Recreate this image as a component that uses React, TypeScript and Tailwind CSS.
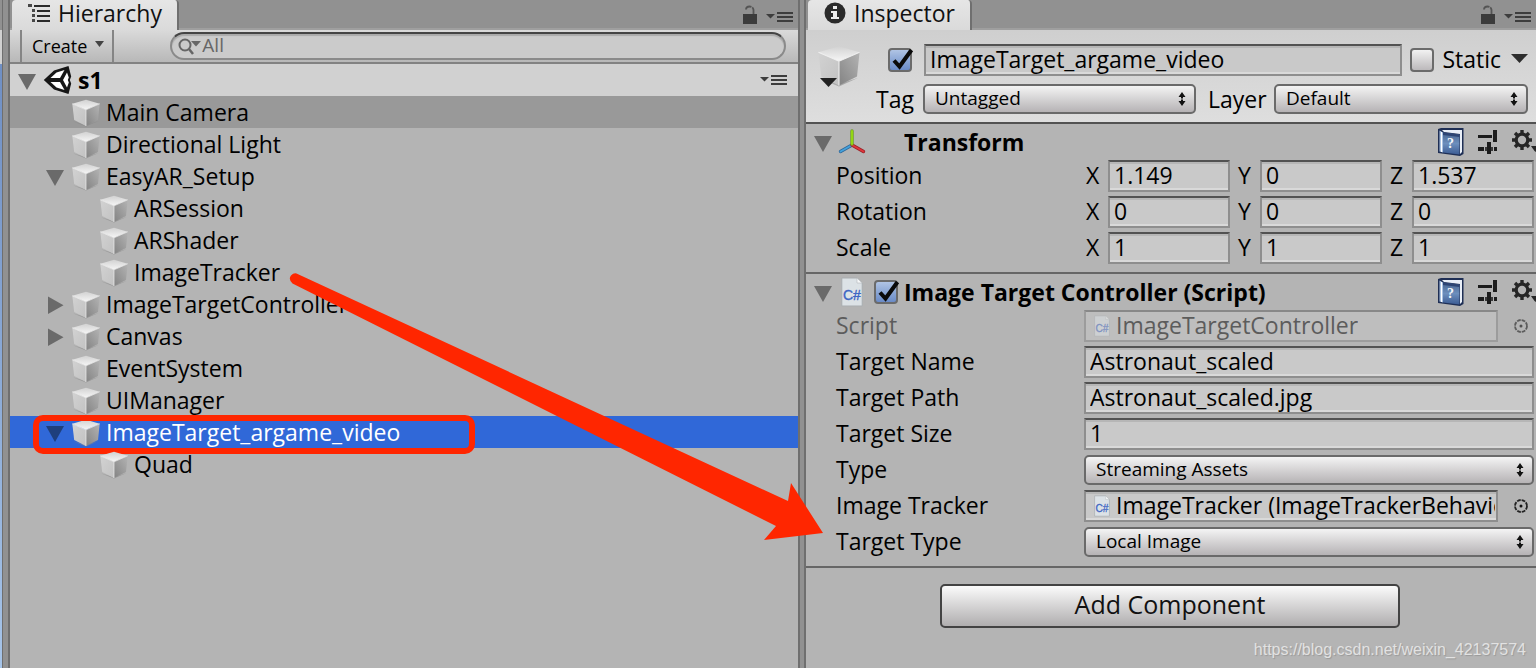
import { useState } from 'react'
import type { ReactNode } from 'react'

type Node = { id: string; depth: number; fold?: 'open' | 'closed' }

const nodes: Node[] = [
  { id: 'Main Camera', depth: 0 },
  { id: 'Directional Light', depth: 0 },
  { id: 'EasyAR_Setup', depth: 0, fold: 'open' },
  { id: 'ARSession', depth: 1 },
  { id: 'ARShader', depth: 1 },
  { id: 'ImageTracker', depth: 1 },
  { id: 'ImageTargetController', depth: 0, fold: 'closed' },
  { id: 'Canvas', depth: 0, fold: 'closed' },
  { id: 'EventSystem', depth: 0 },
  { id: 'UIManager', depth: 0 },
  { id: 'ImageTarget_argame_video', depth: 0, fold: 'open' },
  { id: 'Quad', depth: 1 },
]

const transformRows = [
  { label: 'Position', values: ['1.149', '0', '1.537'] },
  { label: 'Rotation', values: ['0', '0', '0'] },
  { label: 'Scale', values: ['1', '1', '1'] },
]

const fieldClass =
  'h-8 min-w-0 border-2 border-[#8e8e8e] border-t-[#525252] bg-[#c9c9c9] px-1 pb-[2px] text-[23px] leading-6 text-black outline-none shadow-[inset_0_2px_0_#b6b6b6,inset_0_-2px_0_#d9d9d9]'

/* ---------- icons ---------- */

function Cube({ size = 28 }: { size?: number }) {
  return (
    <svg width={size} height={(size * 30) / 28} viewBox="0 -2 28 30" className="shrink-0" aria-hidden="true">
      <defs>
        <linearGradient id="cubeTop" x1="0" y1="0" x2="0" y2="1">
          <stop offset="0" stopColor="#d2d2d2" />
          <stop offset="1" stopColor="#f6f6f6" />
        </linearGradient>
        <linearGradient id="cubeLeft" x1="0" y1="0" x2="1" y2="1">
          <stop offset="0" stopColor="#d2d2d2" />
          <stop offset="1" stopColor="#c2c2c2" />
        </linearGradient>
        <linearGradient id="cubeRight" x1="1" y1="0" x2="0" y2="1">
          <stop offset="0" stopColor="#b4b4b4" />
          <stop offset="1" stopColor="#838383" />
        </linearGradient>
      </defs>
      <path d="M1.5 22.5 14 27.6 26.5 22 14 26Z" fill="#888" opacity=".6" />
      <path d="M.3 4.8 14 .8 27.7 4.8 14 10.8Z" fill="url(#cubeTop)" />
      <path d="M.3 4.8 14 10.8V27L2.2 21Z" fill="url(#cubeLeft)" />
      <path d="M27.7 4.8 14 10.8V27L26 21Z" fill="url(#cubeRight)" />
      <path d="M.3 4.8 14 10.8 27.7 4.8M14 10.8V27" fill="none" stroke="#f0f0f0" strokeWidth=".7" />
    </svg>
  )
}

function Triangle({ dir = 'down', color = '#6a6a6a' }: { dir?: 'down' | 'right'; color?: string }) {
  return (
    <svg width="18" height="20" viewBox="0 0 18 20" aria-hidden="true">
      <path d={dir === 'down' ? 'M0 4H18L9 20Z' : 'M2 2.5V20L17.5 11.200Z'} fill={color} />
    </svg>
  )
}

function UnityLogo() {
  return (
    <svg width="30" height="30" viewBox="0 0 30 30" aria-hidden="true">
      <path d="M.8 15 11 5.500 25.500 1 28.200 11.500 26.800 15 28.200 18.500 25.500 29 11 24.500Z" fill="#161616" />
      <path d="M7.500 13 13.500 7.500 21.500 5 17 13Z" fill="#fff" />
      <path d="M7.500 17 13.500 22.500 21.500 25 17 17Z" fill="#fff" />
      <path d="M20 15 24 7.500 25.800 12.500 24.800 15 25.800 17.500 24 22.500Z" fill="#fff" />
    </svg>
  )
}

function LockIcon() {
  return (
    <svg width="16" height="20" viewBox="0 0 16 20" aria-hidden="true">
      <path d="M4 4.500Q4 1.500 7.500 1.500T11.500 5V9" fill="none" stroke="#3b3b3b" strokeWidth="1.800" strokeDasharray="7 1" opacity=".7" />
      <path d="M1 9H15V19H1Z" fill="#3b3b3b" />
    </svg>
  )
}

function MenuIcon() {
  return (
    <svg width="28" height="12" viewBox="0 0 28 12" aria-hidden="true">
      <path d="M0 3H9L4.500 7.500Z" fill="#3d3d3d" />
      <path d="M11 2H27M11 6H27M11 10H27" stroke="#3d3d3d" strokeWidth="2" />
    </svg>
  )
}

function HelpBook() {
  return (
    <svg width="26" height="28" viewBox="0 0 26 28" aria-hidden="true">
      <defs>
        <linearGradient id="book" x1="0" y1="0" x2="0" y2="1">
          <stop offset="0" stopColor="#46648f" />
          <stop offset=".5" stopColor="#6d8fbd" />
          <stop offset="1" stopColor="#3c5c94" />
        </linearGradient>
      </defs>
      <path d="M0 1 3 0H25.500V26L22 28 0 25Z" fill="#1f2f55" />
      <path d="M4 2H24V24L22 26V6L6 4Z" fill="#e9eff8" />
      <path d="M1.500 2.500 5 4.500V24.500L1.500 23.500Z" fill="#a9c2e2" />
      <path d="M3.500 4V24" stroke="#fff" strokeWidth="1" />
      <path d="M5 4.500 21.500 6.500V26.500L5 24.500Z" fill="url(#book)" />
      <path d="M5 4.500 21.500 6.500V9L5 7Z" fill="#2c4473" />
      <text x="9" y="20" fontSize="14" fontWeight="700" fill="#f4f7fb" fontFamily="Liberation Serif, serif">?</text>
    </svg>
  )
}

function PresetIcon() {
  return (
    <svg width="22" height="24" viewBox="0 0 22 24" aria-hidden="true">
      <g fill="#1c1c1c">
        <path d="M2 5H16V8H2ZM17 0H21V12H17Z" />
        <path d="M2 17H8V21H2ZM11 12H15V24H11ZM18 17H21V21H18Z" />
        <path d="M9 17H17V21H9Z" opacity=".8" />
      </g>
    </svg>
  )
}

function GearIcon() {
  return (
    <svg width="26" height="24" viewBox="0 0 26 24" className="max-w-none" aria-hidden="true">
      <g stroke="#262626" fill="none">
        <circle cx="12" cy="10" r="5.800" strokeWidth="3.200" />
        <path
          d="M12 0V4M12 16V20M2 10H6M18 10H22M5 3 7.800 5.800M16.200 14.200 19 17M5 17 7.800 14.200M16.200 5.800 19 3"
          strokeWidth="3.400"
        />
      </g>
      <path d="M21 16H26V22L24.500 21Z" fill="#262626" />
    </svg>
  )
}

function AxisIcon() {
  return (
    <svg width="28" height="28" viewBox="0 0 28 28" aria-hidden="true">
      <g strokeLinecap="round" fill="none">
        <path d="M14 17 2.500 23.500" stroke="#31689a" strokeWidth="3.400" />
        <path d="M14 17 2.500 23.500" stroke="#43a2dc" strokeWidth="1.800" />
        <path d="M14 17 25.500 23.500" stroke="#9a2328" strokeWidth="3.400" />
        <path d="M14 17 25.500 23.500" stroke="#e0353c" strokeWidth="1.800" />
        <path d="M14 16V3" stroke="#6f9c22" strokeWidth="3.400" />
        <path d="M14 16V3" stroke="#93d612" strokeWidth="2" />
      </g>
    </svg>
  )
}

function ScriptIcon({ small }: { small?: boolean }) {
  return (
    <svg width={small ? 16 : 22} height={small ? 22 : 30} viewBox="0 0 22 30" className="shrink-0" aria-hidden="true">
      <path d="M.8 1H16L21.200 6V29H.8Z" fill="#dce2e6" stroke="#a9adb0" />
      <path d="M16 1V6H21.200Z" fill="#f5f7f8" stroke="#b5b9bc" strokeWidth=".6" />
      <text x="2" y="23" fontSize="14" fill="#3f66c4" stroke="#3f66c4" strokeWidth=".4" fontFamily="Liberation Sans, sans-serif">C#</text>
    </svg>
  )
}

function PickerIcon() {
  return (
    <svg width="16" height="16" viewBox="0 0 16 16" aria-hidden="true">
      <circle cx="8" cy="8" r="6" fill="none" stroke="#222" strokeWidth="1.800" strokeDasharray="3.700 1" />
      <circle cx="8" cy="8" r="1.500" fill="#111" />
    </svg>
  )
}

/* ---------- controls ---------- */

function Check({ label, defaultChecked }: { label: string; defaultChecked?: boolean }) {
  return (
    <span className="relative flex h-6 w-6 shrink-0">
      <input
        type="checkbox"
        aria-label={label}
        defaultChecked={defaultChecked}
        className="peer h-6 w-6 appearance-none rounded-[4px] border-2 border-[#6b6b6b] bg-linear-to-b from-[#f2f2f2] to-[#bcb9bb] checked:from-[#b0c4e4] checked:to-[#6a8bc7]"
      />
      <svg
        width="26"
        height="26"
        viewBox="0 0 26 26"
        className="pointer-events-none absolute top-0 left-0 hidden max-w-none peer-checked:block"
        aria-hidden="true"
      >
        <path d="M6 12.500 11.500 18.500 23.500 2" fill="none" stroke="#0a0a0a" strokeWidth="4" />
      </svg>
    </span>
  )
}

function Dropdown({ id, value, options, className = '' }: { id: string; value: string; options: string[]; className?: string }) {
  return (
    <span className={`relative flex min-w-0 items-center ${className}`}>
      <select
        id={id}
        defaultValue={value}
        className="h-[30px] w-full appearance-none rounded-[5px] border-2 border-[#6a6a6a] bg-linear-to-b from-[#f4f4f4] to-[#b6b3b5] pr-6 pb-[2px] pl-[10px] text-[19px] leading-6 text-black outline-none"
      >
        {options.map((o) => (
          <option key={o}>{o}</option>
        ))}
      </select>
      <svg width="8" height="14" viewBox="0 0 8 14" className="pointer-events-none absolute right-[10px]" aria-hidden="true">
        <path d="M4 0 7.500 5H5V6.500H3V5H.5ZM4 14 .5 9H3V7.500H5V9H7.500Z" fill="#111" />
      </svg>
    </span>
  )
}

function Tab({ icon, title }: { icon: ReactNode; title: string }) {
  return (
    <div className="flex h-[30px] shrink-0 items-center justify-between border-b-2 border-[#9f9f9f] bg-[#919191] pr-1">
      <button className="ml-[2px] flex h-[30px] items-center gap-2 self-start rounded-t-[4px] border-r-2 border-[#6f6f6f] bg-linear-to-b from-[#e6e6e6] to-[#dadada] pr-[15px] pb-1 pl-4 text-[23px] leading-6 text-[#111]">
        {icon}
        {title}
      </button>
      <div className="flex items-center gap-2 pt-[2px]">
        <button aria-label="Lock"><LockIcon /></button>
        <button aria-label={`${title} menu`} className="pt-1"><MenuIcon /></button>
      </div>
    </div>
  )
}

function ComponentHeader({ title, icon, check }: { title: string; icon: ReactNode; check?: boolean }) {
  return (
    <div className="flex h-9 items-center overflow-hidden pl-2">
      <button aria-label={`Fold ${title}`} className="w-[23px]"><Triangle /></button>
      <span className="flex w-[30px] justify-center">{icon}</span>
      <span className="flex w-[37px] pl-[7px]">{check && <Check label={`Enable ${title}`} defaultChecked />}</span>
      <h2 className="min-w-0 flex-1 truncate text-[23px] leading-8 font-bold">{title}</h2>
      <div className="flex shrink-0 items-center gap-3">
        <button aria-label="Help"><HelpBook /></button>
        <button aria-label="Presets"><PresetIcon /></button>
        <button aria-label="Settings"><GearIcon /></button>
      </div>
    </div>
  )
}

function Row({ label, htmlFor, muted, children }: { label: string; htmlFor: string; muted?: boolean; children: ReactNode }) {
  return (
    <div className="flex h-8 items-center pr-[2px] pl-[30px]">
      <label htmlFor={htmlFor} className={`w-[248px] shrink-0 self-start text-[23px] leading-[30px] ${muted ? 'text-[#5c5c5c]' : ''}`}>
        {label}
      </label>
      {children}
    </div>
  )
}

function ObjectField({ id, value, muted }: { id: string; value: string; muted?: boolean }) {
  return (
    <>
      <button
        id={id}
        disabled={muted}
        className="flex h-8 min-w-0 flex-1 items-center gap-[6px] border-2 border-[#8e8e8e] border-t-[#525252] bg-[#c9c9c9] pr-px pl-2 text-left text-[23px] shadow-[inset_0_2px_0_#b6b6b6,inset_0_-2px_0_#d9d9d9] disabled:border-[#9c9c9c] disabled:border-t-[#888] disabled:bg-[#bebebe] disabled:text-[#5c5c5c] disabled:shadow-none"
      >
        <span className={`flex shrink-0 ${muted ? 'opacity-50' : ''}`}><ScriptIcon small /></span>
        <span className="min-w-0 overflow-x-clip pb-[2px] leading-6 whitespace-nowrap">{value}</span>
      </button>
      <button aria-label={`Pick ${value}`} disabled={muted} className="flex w-9 justify-center pl-[10px] disabled:opacity-60">
        <PickerIcon />
      </button>
    </>
  )
}

/* ---------- panels ---------- */

function Hierarchy() {
  const [selected, setSelected] = useState('ImageTarget_argame_video')

  return (
    <section className="flex min-w-0 flex-[788] flex-col bg-[#b4b4b4]">
      <Tab
        title="Hierarchy"
        icon={
          <svg width="22" height="18" viewBox="0 0 22 18" aria-hidden="true">
            <g fill="#2b2b2b">
              <path d="M0 0H4V3H0ZM4 5H7V8H4ZM4 10H7V13H4ZM4 15H7V18H4Z" opacity=".85" />
              <path d="M6 1H22V3H6ZM9 6H22V8H9ZM9 11H22V13H9ZM9 16H22V18H9Z" />
            </g>
          </svg>
        }
      />
      <div className="flex h-[34px] shrink-0 items-center border-b-2 border-[#828282] bg-linear-to-b from-[#dadada] to-[#b8b8b8] pr-3 pl-[10px]">
        <button className="flex h-full items-center gap-2 border-x-2 border-[#858585] pr-2 pl-[10px] text-[18px] leading-6">
          Create
          <svg width="9" height="6" viewBox="0 0 9 6" className="mb-1" aria-hidden="true"><path d="M0 0H9L4.500 6Z" fill="#444" /></svg>
        </button>
        <label className="ml-14 flex h-7 flex-1 items-center rounded-full border-2 border-[#8a8a8a] border-t-[#444] bg-[#cbcbcb] pl-[6px] shadow-[inset_0_2px_1px_#aaa]">
          <svg width="24" height="18" viewBox="0 0 24 18" aria-hidden="true">
            <circle cx="7" cy="8" r="5.500" fill="none" stroke="#666" strokeWidth="2" />
            <path d="M11 12 15 17" stroke="#666" strokeWidth="2.500" />
            <path d="M13 4H23L18 9.500Z" fill="#666" />
          </svg>
          <input aria-label="Search" placeholder="All" className="min-w-0 flex-1 bg-transparent pb-[2px] text-[19px] leading-6 outline-none placeholder:text-[#666]" />
        </label>
      </div>
      <div className="flex h-8 shrink-0 items-center bg-[#d1d1d1] pr-[10px] pl-2">
        <button aria-label="Fold s1" className="flex"><Triangle /></button>
        <span className="ml-[7px] flex"><UnityLogo /></span>
        <span className="ml-[5px] flex-1 text-[23px] leading-8 font-bold">s1</span>
        <button aria-label="Scene menu"><MenuIcon /></button>
      </div>
      <ul role="tree" aria-label="s1">
        {nodes.map((n) => {
          const active = n.id === selected
          return (
            <li
              key={n.id}
              role="treeitem"
              aria-selected={active}
              onClick={() => setSelected(n.id)}
              className={`relative flex h-8 items-center text-[23px] leading-8 ${n.depth ? 'pl-16' : 'pl-9'} ${
                active ? 'bg-[#3068d8] text-white' : n.id === 'Main Camera' ? 'bg-[#999]' : ''
              }`}
            >
              <span className="flex w-[26px] shrink-0">
                {n.fold && (
                  <button aria-label={`Fold ${n.id}`}>
                    <Triangle dir={n.fold === 'open' ? 'down' : 'right'} color={active ? '#1e3f7c' : '#6a6a6a'} />
                  </button>
                )}
              </span>
              <Cube />
              <span className="ml-[6px]">{n.id}</span>
              {n.id === 'ImageTarget_argame_video' && (
                <span className="pointer-events-none absolute -top-px left-[23px] h-[39px] w-[442px] rounded-[10px] border-[6px] border-[#ff2600]" />
              )}
            </li>
          )
        })}
      </ul>
    </section>
  )
}

function Inspector() {
  return (
    <section className="flex min-w-0 flex-[730] flex-col overflow-x-clip bg-[#b4b4b4]">
      <Tab
        title="Inspector"
        icon={
          <svg width="22" height="22" viewBox="0 0 22 22" aria-hidden="true">
            <circle cx="11" cy="11" r="10.500" fill="#2b2b2b" />
            <path d="M9 4H13V7H9ZM7 9H13V15H15V17H7V15H9V11H7Z" fill="#eee" />
          </svg>
        }
      />
      <div className="flex h-[94px] shrink-0 border-b-2 border-[#525252] bg-linear-to-b from-[#cfcfcf] to-[#dedede] pr-2">
        <button aria-label="Object icon" className="relative mt-3 ml-3 flex h-12 w-11 shrink-0">
          <Cube size={42} />
          <svg width="17" height="9" viewBox="0 0 17 9" className="absolute top-9 left-[2px]" aria-hidden="true"><path d="M0 0H17L8.500 9Z" fill="#222" /></svg>
        </button>
        <div className="flex min-w-0 flex-1 flex-col pt-[14px] pl-[14px] text-[23px]">
          <div className="flex h-8 items-center">
            <span className="flex w-12 pl-3"><Check label="Active" defaultChecked /></span>
            <input aria-label="Name" defaultValue="ImageTarget_argame_video" className={`${fieldClass} flex-1`} />
            <label className="flex items-center gap-2 pl-2">
              <Check label="Static" />
              <span className="h-8 leading-[30px]">Static</span>
            </label>
            <button aria-label="Static flags" className="pb-1 pl-[10px]">
              <svg width="17" height="9" viewBox="0 0 17 9" aria-hidden="true"><path d="M0 0H17L8.500 9Z" fill="#2d2d2d" /></svg>
            </button>
          </div>
          <div className="mt-2 flex h-[30px] leading-[30px]">
            <label htmlFor="tag" className="w-[47px]">Tag</label>
            <Dropdown id="tag" value="Untagged" options={['Untagged', 'Player', 'MainCamera']} className="flex-[273]" />
            <label htmlFor="layer" className="w-[78px] pl-3">Layer</label>
            <Dropdown id="layer" value="Default" options={['Default', 'UI', 'Water']} className="flex-[254]" />
          </div>
        </div>
      </div>

      <div className="h-[150px] shrink-0 border-b-2 border-[#666]">
        <ComponentHeader title="Transform" icon={<AxisIcon />} />
        <div className="flex flex-col gap-1">
          {transformRows.map((r) => (
            <div key={r.label} className="flex h-8 pr-[2px] pl-[30px] text-[23px] leading-[30px]">
              <span className="w-[242px] shrink-0">{r.label}</span>
              <div className="grid min-w-0 flex-1 grid-cols-3">
                {['X', 'Y', 'Z'].map((axis, i) => (
                  <label key={axis} className="flex min-w-0">
                    <span className="w-[30px] shrink-0 pl-2">{axis}</span>
                    <input aria-label={`${r.label} ${axis}`} defaultValue={r.values[i]} className={`${fieldClass} w-full`} />
                  </label>
                ))}
              </div>
            </div>
          ))}
        </div>
      </div>

      <div className="shrink-0 border-b-2 border-[#666] pb-2">
        <ComponentHeader title="Image Target Controller (Script)" icon={<ScriptIcon />} check />
        <div className="flex flex-col gap-1">
          <Row label="Script" htmlFor="script" muted><ObjectField id="script" value="ImageTargetController" muted /></Row>
          <Row label="Target Name" htmlFor="target-name"><input id="target-name" defaultValue="Astronaut_scaled" className={`${fieldClass} flex-1`} /></Row>
          <Row label="Target Path" htmlFor="target-path"><input id="target-path" defaultValue="Astronaut_scaled.jpg" className={`${fieldClass} flex-1`} /></Row>
          <Row label="Target Size" htmlFor="target-size"><input id="target-size" defaultValue="1" className={`${fieldClass} flex-1`} /></Row>
          <Row label="Type" htmlFor="type"><Dropdown id="type" value="Streaming Assets" options={['Streaming Assets', 'Absolute']} className="flex-1" /></Row>
          <Row label="Image Tracker" htmlFor="tracker"><ObjectField id="tracker" value="ImageTracker (ImageTrackerBehaviour)" /></Row>
          <Row label="Target Type" htmlFor="target-type"><Dropdown id="target-type" value="Local Image" options={['Local Image', 'Cloud Image']} className="flex-1" /></Row>
        </div>
      </div>

      <div className="flex flex-1 flex-col items-center pt-4 pr-[2px]">
        <button className="h-11 w-[460px] rounded-[5px] border-2 border-[#434343] bg-linear-to-b from-[#fbfbfb] to-[#b0aeaf] pb-1 text-[25px] leading-8 text-[#111]">
          Add Component
        </button>
        <a
          href="https://blog.csdn.net/weixin_42137574"
          className="mt-auto mr-2 mb-[6px] self-end font-['Liberation_Sans',Arial,sans-serif] text-[16px] leading-6 text-[#e2e2e2] [text-shadow:1px_1px_1px_#999]"
        >
          https://blog.csdn.net/weixin_42137574
        </a>
      </div>
    </section>
  )
}

export default function App() {
  return (
    <main className="relative flex min-h-screen overflow-hidden bg-[#919191] font-['Open_Sans','Noto_Sans',sans-serif] text-black">
      <div className="flex w-[2px] shrink-0 flex-col">
        <div className="h-[30px] bg-[#919191]" />
        <div className="h-[34px] bg-[#d0d0d0]" />
        <div className="flex-1 bg-linear-to-b from-[#6f8fc4] to-[#a6c4e8]" />
      </div>
      <div className="w-2 shrink-0 border-r-2 border-l border-[#6f6f6f] bg-[#919191]" />
      <Hierarchy />
      <div className="w-2 shrink-0 border-x-2 border-[#6f6f6f] bg-[#919191]" />
      <Inspector />

      {/* drag hint from the tracker node to the inspector slot */}
      <svg width="540" height="272" viewBox="0 0 540 272" className="pointer-events-none absolute top-[272px] left-[288px]" aria-hidden="true">
        <path d="M8.500 1.500 500 229 503 211 535 261 476 268 488 254 4.500 11.500Q0 7 3 3.500 5.500 .8 8.500 1.500Z" fill="#ff2600" />
      </svg>
    </main>
  )
}
